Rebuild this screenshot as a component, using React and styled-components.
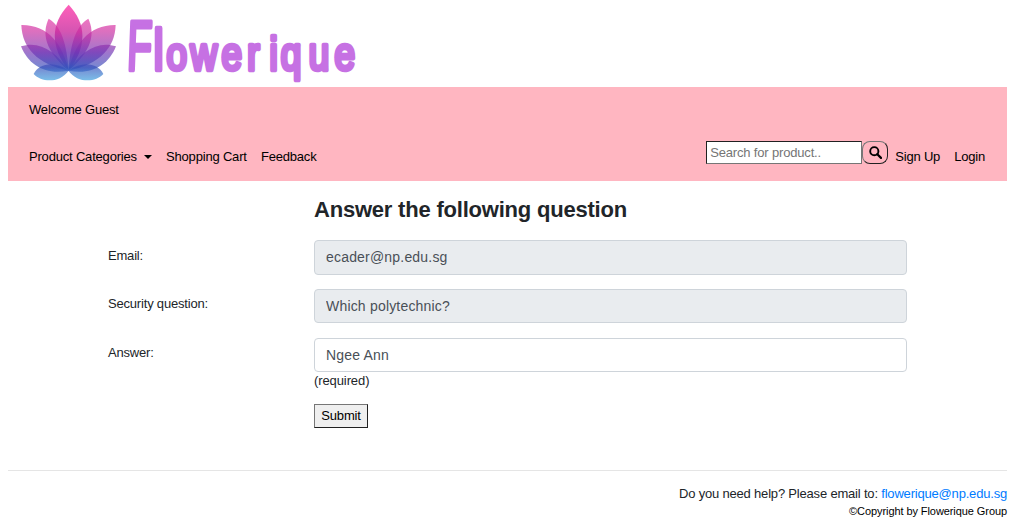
import React from "react";
import styled, { createGlobalStyle } from "styled-components";

const GlobalStyle = createGlobalStyle`
  *, *::before, *::after { box-sizing: border-box; }
  html { background: #fff; }
  body {
    margin: 0;
    padding: 0 10px 0 8px;
    font-family: "Liberation Sans", Arial, sans-serif;
    font-size: 13px;
    line-height: 20px;
    letter-spacing: -0.19px;
    color: #212529;
  }
`;

const Logo = styled.svg`
  display: block;
  width: 362px;
  height: 87px;
`;

const Wordmark = styled.text`
  font-family: "Liberation Sans", Arial, sans-serif;
  font-size: ${(p) => p.$size || 46}px;
  letter-spacing: 0;
  fill: #c671e3;
  stroke: #c671e3;
  stroke-width: 4.6px;
  stroke-linejoin: round;
`;

const Navbar = styled.nav`
  height: 94px;
  padding: 13px 22px 0 21px;
  background: #ffb6c1;
  color: #000;
`;

const NavRow = styled.div`
  display: flex;
  justify-content: space-between;
  margin-top: 20px;
`;

const NavGroup = styled.div`
  display: flex;
  gap: ${(p) => p.$gap}px;
`;

const NavLink = styled.a`
  display: flex;
  align-items: center;
  height: 20px;
  margin-top: 7px;
  color: #000;
  white-space: nowrap;
`;

const Caret = styled.span`
  margin-left: 7px;
  border: 4px solid transparent;
  border-top-color: #000;
  border-bottom: 0;
`;

const Search = styled.form`
  display: flex;
  height: 23px;
  margin: 1px -7px 0 0;
`;

const SearchInput = styled.input`
  width: 156px;
  height: 23px;
  padding: 0 3px;
  border: 1px solid;
  border-color: #212121 #767676 #767676 #212121;
  border-radius: 0;
  background: #fff;
  font: 13px "Liberation Sans", Arial, sans-serif;
  letter-spacing: -0.17px;
  outline: 0;
  &::placeholder { color: #757575; opacity: 1; }
`;

const SearchButton = styled.button`
  display: flex;
  align-items: center;
  justify-content: center;
  width: 26px;
  height: 23px;
  padding: 0;
  border: 1px solid;
  border-color: #767676 #212121 #212121 #767676;
  border-radius: 8px;
  background: transparent;
`;

const Form = styled.form`
  display: grid;
  grid-template-columns: 206px 593px;
  padding: 15px 0 0 100px;
  height: 289px;
  align-content: start;
`;

const Title = styled.h1`
  grid-column: 2;
  margin: 0 0 16px;
  font-size: 22px;
  line-height: 28px;
  font-weight: 700;
  letter-spacing: -0.21px;
`;

const Label = styled.label`
  padding-top: ${(p) => p.$top || 5}px;
`;

const Control = styled.div`
  height: ${(p) => p.$height}px;
`;

const Field = styled.input`
  display: block;
  width: 593px;
  height: ${(p) => p.$height || 34}px;
  padding: 0 11px ${(p) => (p.$height ? 1 : 0)}px;
  border: 1px solid #ced4da;
  border-radius: 4px;
  background: ${(p) => (p.readOnly ? "#e9ecef" : "#fff")};
  color: #495057;
  font: 14px "Liberation Sans", Arial, sans-serif;
  letter-spacing: 0.19px;
  outline: 0;
`;

const Hint = styled.div`
  line-height: 18px;
  letter-spacing: -0.1px;
`;

const Submit = styled.button`
  grid-column: 2;
  justify-self: start;
  width: 54px;
  height: 24px;
  padding: 0 0 2px;
  border: 1px solid;
  border-color: #767676 #212121 #212121 #767676;
  border-radius: 0;
  background: #efefef;
  color: #000;
  font: 13px "Liberation Sans", Arial, sans-serif;
  letter-spacing: -0.15px;
`;

const Footer = styled.footer`
  border-top: 1px solid #e5e5e5;
  padding-top: 13px;
  text-align: right;
`;

const MailLink = styled.a`
  color: #007bff;
`;

const Copyright = styled.div`
  font-size: 11px;
  line-height: 15px;
  letter-spacing: -0.08px;
  color: #000;
`;

function SidePetals() {
  return (
    <>
      <path d="M146 56C126 98 133 151 206 212C200 132 184 78 146 56Z" />
      <path d="M64 75C66 142 111 193 206 212C187 132 145 74 64 75Z" />
      <path d="M63 139C86 197 138 226 206 212C169 156 120 121 63 139Z" />
      <path d="M101 222C125 248 178 250 206 212C163 181 117 190 101 222Z" />
    </>
  );
}

function BrandLogo() {
  return (
    <Logo viewBox="8 0 362 87" role="img" aria-label="Flowerique">
      <defs>
        <linearGradient id="petal" gradientUnits="userSpaceOnUse" x1="0" y1="14" x2="0" y2="242">
          <stop offset="0" stopColor="#ff37a8" />
          <stop offset="0.35" stopColor="#cb2a9f" />
          <stop offset="0.63" stopColor="#7033b4" />
          <stop offset="0.83" stopColor="#3450bb" />
          <stop offset="1" stopColor="#39a0de" />
        </linearGradient>
      </defs>
      <g transform="scale(.333333)" fill="url(#petal)" fillOpacity="0.67">
        <SidePetals />
        <g transform="translate(411 0) scale(-1 1)">
          <SidePetals />
        </g>
        <path fillOpacity="0.8" d="M206 14C150 72 151 141 206 212C261 141 261 72 206 14Z" />
      </g>
      <Wordmark $size={70} transform="translate(126.5 70) skewX(-2) scale(.58 1)">F</Wordmark>
      <Wordmark $size={57} transform="translate(153.5 70) scale(.8 1)">l</Wordmark>
      <Wordmark
        transform="translate(0 70) scale(.8 1)"
        x="208 238 277 309 337 351 386 418"
      >
        owerique
      </Wordmark>
    </Logo>
  );
}

function SearchIcon() {
  return (
    <svg width="13" height="13" viewBox="0 0 13 13" fill="none" stroke="#000" strokeWidth="1.9">
      <circle cx="5.3" cy="5.2" r="4.1" />
      <path d="M8.3 8.2L12 11.9" strokeWidth="2.2" strokeLinecap="round" />
    </svg>
  );
}

export default function App() {
  return (
    <>
      <GlobalStyle />
      <BrandLogo />
      <Navbar>
        <div>Welcome Guest</div>
        <NavRow>
          <NavGroup $gap={14.2}>
            <NavLink>Product Categories<Caret /></NavLink>
            <NavLink>Shopping Cart</NavLink>
            <NavLink>Feedback</NavLink>
          </NavGroup>
          <NavGroup $gap={14}>
            <Search>
              <SearchInput placeholder="Search for product.." />
              <SearchButton type="button" aria-label="Search"><SearchIcon /></SearchButton>
            </Search>
            <NavLink>Sign Up</NavLink>
            <NavLink>Login</NavLink>
          </NavGroup>
        </NavRow>
      </Navbar>
      <Form>
        <Title>Answer the following question</Title>
        <Label $top={6}>Email:</Label>
        <Control $height={49}><Field $height={35} readOnly value="ecader@np.edu.sg" /></Control>
        <Label>Security question:</Label>
        <Control $height={49}><Field readOnly value="Which polytechnic?" /></Control>
        <Label>Answer:</Label>
        <Control $height={66}>
          <Field defaultValue="Ngee Ann" />
          <Hint>(required)</Hint>
        </Control>
        <Submit type="button">Submit</Submit>
      </Form>
      <Footer>
        <div>Do you need help? Please email to: <MailLink>flowerique@np.edu.sg</MailLink></div>
        <Copyright>©Copyright by Flowerique Group</Copyright>
      </Footer>
    </>
  );
}
